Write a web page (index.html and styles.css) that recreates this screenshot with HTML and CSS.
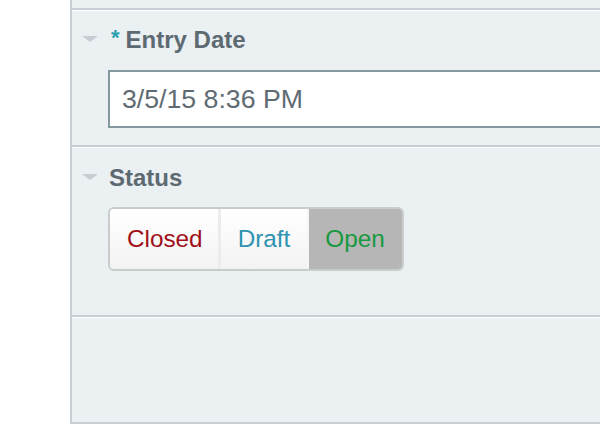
FILE: index.html
```html
<!DOCTYPE html>
<html>
<head>
<meta charset="utf-8">
<link rel="stylesheet" href="styles.css">
</head>
<body>
<div class="page">
  <div class="panel">
    <div class="stub"></div>
    <section class="field field-date">
      <div class="label">
        <span class="caret"></span>
        <span class="req">*</span>
        <span class="label-text">Entry Date</span>
      </div>
      <div class="input">3/5/15 8:36 PM</div>
    </section>
    <section class="field field-status">
      <div class="label">
        <span class="caret"></span>
        <span class="label-text">Status</span>
      </div>
      <div class="segmented">
        <div class="seg seg-closed">Closed</div>
        <div class="seg seg-draft">Draft</div>
        <div class="seg seg-open">Open</div>
      </div>
    </section>
    <section class="field field-empty"></section>
  </div>
</div>
</body>
</html>
```
FILE: styles.css
```css
html, body {
  margin: 0;
  padding: 0;
  background: #ffffff;
}
body {
  font-family: "Liberation Sans", Arial, sans-serif;
  width: 600px;
  height: 448px;
  overflow: hidden;
}
.page {
  padding-left: 70px;
}
.panel {
  background: #ebf0f3;
  border-left: 2px solid #c8d0d6;
  border-bottom: 2px solid #c8d0d6;
  height: 424px;
  box-sizing: border-box;
  display: flex;
  flex-direction: column;
}
.stub {
  height: 8px;
}
.field {
  border-top: 2px solid #c6cfd6;
  box-shadow: inset 0 1px 0 #ffffff;
  padding: 16px 0 0 10px;
}
.field-date {
  padding-bottom: 17px;
}
.field-status {
  display: flex;
  flex-direction: column;
  padding-top: 17px;
  padding-bottom: 44px;
}
.field-empty {
  flex: 1;
  padding: 0;
}
.label {
  display: flex;
  align-items: center;
  height: 28px;
  font-size: 24px;
  line-height: 28px;
  font-weight: bold;
  color: #5d6a72;
}
.caret {
  width: 0;
  height: 0;
  border-left: 8px solid transparent;
  border-right: 8px solid transparent;
  border-top: 6px solid #c6cdd2;
  margin-right: 11px;
  margin-top: -3px;
}
.req {
  color: #2aa0ae;
  font-size: 22px;
  margin-right: 6px;
  margin-left: 2px;
  margin-top: -4px;
}
.input {
  margin-top: 16px;
  margin-left: 26px;
  height: 58px;
  box-sizing: border-box;
  border: 2px solid #85979f;
  border-right: none;
  background: #ffffff;
  padding-left: 12px;
  font-size: 26.7px;
  line-height: 54px;
  color: #5f6b72;
}
.segmented {
  margin-top: 15px;
  margin-left: 26px;
  display: inline-flex;
  align-self: flex-start;
  border: 2px solid #c9cccd;
  border-radius: 6px;
  overflow: hidden;
  height: 64px;
  box-sizing: border-box;
}
.seg {
  font-size: 24.3px;
  line-height: 60px;
  background: linear-gradient(#ffffff, #f3f3f3);
}
.seg-closed {
  color: #a10f19;
  padding-left: 17px;
  padding-right: 15px;
  border-right: 3px solid #ececec;
}
.seg-draft {
  color: #2f93b1;
  padding-left: 17px;
  padding-right: 17px;
  border-right: 2px solid #f6f6f6;
}
.seg-open {
  color: #17993f;
  background: #b6b6b6;
  padding-left: 16px;
  padding-right: 17px;
}
```
